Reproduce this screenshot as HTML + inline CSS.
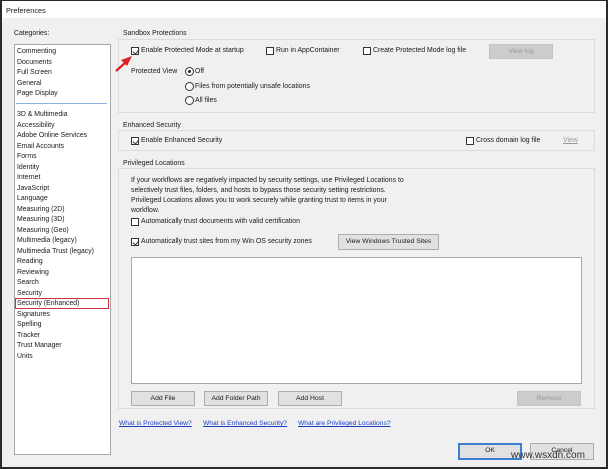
<!DOCTYPE html>
<html><head><meta charset="utf-8"><style>
*{margin:0;padding:0;box-sizing:border-box}
body{width:608px;height:469px;background:#fff;font-family:"Liberation Sans",sans-serif;font-size:6.9px;color:#1a1a1a;position:relative;overflow:hidden}
.frame{position:absolute;left:0;top:0;width:608px;height:469px;background:#f0f0f0;box-shadow:inset 2px 0 0 #2a2a2a,inset -2px -2px 0 #2a2a2a,inset 0 1px 0 #2a2a2a}
.a{position:absolute;white-space:nowrap}
.box{position:absolute;border:1px solid #dcdcdc}
.cb{position:absolute;width:8px;height:8px;border:1px solid #333;background:#fff}
.cb.on::after{content:"";position:absolute;left:1.5px;top:0px;width:3px;height:5px;border:solid #333;border-width:0 1px 1px 0;transform:rotate(40deg)}
.rd{position:absolute;width:9px;height:9px;border:1px solid #333;border-radius:50%;background:#fff}
.rd.on::after{content:"";position:absolute;left:2px;top:2px;width:3px;height:3px;border-radius:50%;background:#222}
.btn{position:absolute;background:#e1e1e1;border:1px solid #adadad;text-align:center;font-size:6.8px;line-height:13px}
.dis{background:#ccc;border-color:#c4c4c4;color:#9a9a9a}
.lnk{position:absolute;color:#1a3fc0;text-decoration:underline;font-size:6.7px}
</style></head><body><div class="frame">
<div class="a" style="left:2px;top:1px;width:604px;height:17px;background:#fff"></div>
<div class="a" style="left:6px;top:6px;font-size:7.4px">Preferences</div>
<div class="a" style="left:14px;top:30px">Categories:</div>
<div class="a" style="left:14px;top:44px;width:97px;height:411px;background:#fff;border:1px solid #a8a8a8"></div>
<div class="a" style="left:17px;top:47px;line-height:10.5px">Commenting<br>Documents<br>Full Screen<br>General<br>Page Display</div>
<div class="a" style="left:16px;top:103px;width:91px;height:1px;background:#8ab4e0"></div>
<div class="a" style="left:17px;top:110px;line-height:10.52px">3D &amp; Multimedia<br>Accessibility<br>Adobe Online Services<br>Email Accounts<br>Forms<br>Identity<br>Internet<br>JavaScript<br>Language<br>Measuring (2D)<br>Measuring (3D)<br>Measuring (Geo)<br>Multimedia (legacy)<br>Multimedia Trust (legacy)<br>Reading<br>Reviewing<br>Search<br>Security<br>Security (Enhanced)<br>Signatures<br>Spelling<br>Tracker<br>Trust Manager<br>Units</div>
<div class="a" style="left:15px;top:298px;width:94px;height:11px;border:1px solid #d03040"></div>

<div class="box" style="left:118px;top:39px;width:477px;height:74px"></div>
<div class="a" style="left:123px;top:30px;background:#f0f0f0;padding-right:2px">Sandbox Protections</div>
<div class="cb on" style="left:131px;top:47px"></div><div class="a" style="left:141px;top:47px">Enable Protected Mode at startup</div>
<div class="cb" style="left:266px;top:47px"></div><div class="a" style="left:276px;top:47px">Run in AppContainer</div>
<div class="cb" style="left:363px;top:47px"></div><div class="a" style="left:373px;top:47px">Create Protected Mode log file</div>
<div class="btn dis" style="left:489px;top:44px;width:64px;height:15px">View log</div>
<div class="a" style="left:131px;top:68px">Protected View</div>
<div class="rd on" style="left:185px;top:67px"></div><div class="a" style="left:195px;top:68px">Off</div>
<div class="rd" style="left:185px;top:82px"></div><div class="a" style="left:195px;top:83px">Files from potentially unsafe locations</div>
<div class="rd" style="left:185px;top:96px"></div><div class="a" style="left:195px;top:97px">All files</div>
<svg class="a" style="left:112px;top:52px" width="26" height="22"><path d="M4 19 L14 10" stroke="#e02020" stroke-width="2.2"/><path d="M20 4 L9 8 L15 14 Z" fill="#e02020"/></svg>

<div class="box" style="left:118px;top:130px;width:477px;height:21px"></div>
<div class="a" style="left:123px;top:122px;background:#f0f0f0;padding-right:2px">Enhanced Security</div>
<div class="cb on" style="left:131px;top:137px"></div><div class="a" style="left:141px;top:137px">Enable Enhanced Security</div>
<div class="cb" style="left:466px;top:137px"></div><div class="a" style="left:476px;top:137px">Cross domain log file</div>
<div class="a" style="left:563px;top:137px;color:#999;text-decoration:underline">View</div>

<div class="box" style="left:118px;top:168px;width:477px;height:241px"></div>
<div class="a" style="left:123px;top:160px;background:#f0f0f0;padding-right:2px">Privileged Locations</div>
<div class="a" style="left:131px;top:176px;line-height:10px">If your workflows are negatively impacted by security settings, use Privileged Locations to<br>selectively trust files, folders, and hosts to bypass those security setting restrictions.<br>Privileged Locations allows you to work securely while granting trust to items in your<br>workflow.</div>
<div class="cb" style="left:131px;top:218px"></div><div class="a" style="left:141px;top:218px">Automatically trust documents with valid certification</div>
<div class="cb on" style="left:131px;top:238px"></div><div class="a" style="left:141px;top:238px">Automatically trust sites from my Win OS security zones</div>
<div class="btn" style="left:338px;top:234px;width:101px;height:16px;line-height:14px">View Windows Trusted Sites</div>
<div class="a" style="left:131px;top:257px;width:451px;height:127px;background:#fff;border:1px solid #a8a8a8"></div>
<div class="btn" style="left:131px;top:391px;width:64px;height:15px">Add File</div>
<div class="btn" style="left:204px;top:391px;width:64px;height:15px">Add Folder Path</div>
<div class="btn" style="left:278px;top:391px;width:64px;height:15px">Add Host</div>
<div class="btn dis" style="left:517px;top:391px;width:64px;height:15px">Remove</div>

<div class="lnk" style="left:119px;top:420px">What is Protected View?</div>
<div class="lnk" style="left:203px;top:420px">What is Enhanced Security?</div>
<div class="lnk" style="left:298px;top:420px">What are Privileged Locations?</div>

<div class="btn" style="left:458px;top:443px;width:64px;height:17px;border:2px solid #3c7fd0;line-height:12px">OK</div>
<div class="btn" style="left:530px;top:443px;width:64px;height:17px;line-height:13px">Cancel</div>
<div class="a" style="left:511px;top:450px;font-size:10px;color:#333">www.wsxdn.com</div>
</div></body></html>
